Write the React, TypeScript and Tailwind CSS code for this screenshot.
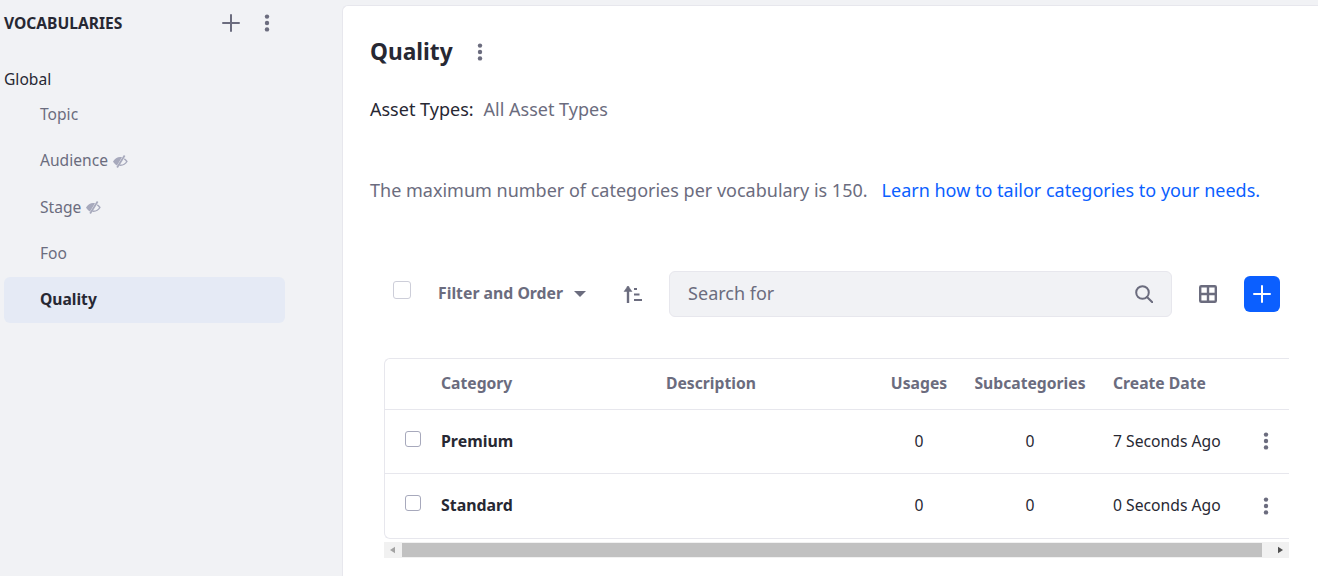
function Kebab({ className }: { className: string }) {
  return (
    <svg viewBox="0 0 6 18" className={className} fill="currentColor">
      <circle cx="3" cy="2.6" r="2.2" />
      <circle cx="3" cy="9" r="2.2" />
      <circle cx="3" cy="15.4" r="2.2" />
    </svg>
  )
}

function PlusIcon({ className }: { className: string }) {
  return (
    <svg viewBox="0 0 18 18" className={className} fill="none" stroke="currentColor" strokeWidth="2" strokeLinecap="round">
      <path d="M9 1v16M1 9h16" />
    </svg>
  )
}

function EyeOff() {
  return (
    <svg viewBox="0 0 15 13" className="w-[15px] h-[13px] ml-[5px] text-[#a7a9bc]" fill="currentColor">
      <path d="M0 6.500C1.600 3.800 4.200 2 7.200 2c.6 0 1.200.1 1.800.2L4 10.500C2.300 9.700 1 8.300 0 6.500Z" />
      <path d="M10.900 0l1.500 1-7.500 12-1.500-1Z" />
      <path d="M11.300 3.800c1 .6 1.900 1.600 2.600 2.700-1.400 2.300-3.700 3.700-6.300 3.700-.4 0-.8 0-1.200-.1" fill="none" stroke="currentColor" strokeWidth="1.400" />
    </svg>
  )
}

function NavItem({ label, hidden, className }: { label: string; hidden?: boolean; className: string }) {
  return (
    <div className={`flex items-center pl-9 text-[15.6px] text-[#6b6c7e] ${className}`}>
      {label}
      {hidden && <EyeOff />}
    </div>
  )
}

function Row({ name, date, last }: { name: string; date: string; last?: boolean }) {
  return (
    <div className={`grid grid-cols-[56px_225px_211px_84px_138px_1fr] h-[64px] items-center text-[#272833] text-[15.7px] ${last ? '' : 'border-b border-[#e7e7ed]'}`}>
      <div className={`pl-[20px] ${last ? '-mt-[6px]' : '-mt-[5px]'}`}>
        <div className="w-[16px] h-[16px] rounded-[3px] border border-[#a7a9bc] bg-white" />
      </div>
      <div className="font-bold text-[15.9px]">{name}</div>
      <div />
      <div className="text-center">0</div>
      <div className="text-center">0</div>
      <div className="flex items-center pl-[14px] whitespace-nowrap">
        {date}
        <Kebab className="w-[6px] h-[18px] ml-[42px] text-[#6b6c7e] shrink-0" />
      </div>
    </div>
  )
}

export default function App() {
  return (
    <div className="w-[1318px] h-[576px] flex overflow-hidden bg-[#f1f2f5] font-['Noto_Sans',sans-serif]">
      {/* Sidebar */}
      <aside className="w-[342px] shrink-0 pl-1 pt-[11px]">
        <div className="flex items-center w-[266px] h-[26px]">
          <span className="font-bold text-[15.6px] text-[#272833]">VOCABULARIES</span>
          <PlusIcon className="w-[18px] h-[18px] ml-auto -mt-[2px] text-[#6b6c7e]" />
          <Kebab className="w-[6px] h-[18px] ml-[24px] -mt-[2px] text-[#6b6c7e]" />
        </div>
        <div className="mt-[30px] h-[26px] flex items-center text-[15.6px] text-[#272833]">Global</div>
        <div className="w-[281px] -mt-[1px]">
          <NavItem label="Topic" className="h-[46px]" />
          <NavItem label="Audience" hidden className="h-[46px]" />
          <NavItem label="Stage" hidden className="h-[47px]" />
          <NavItem label="Foo" className="h-[46px]" />
          <div className="h-[46px] flex items-center pl-9 text-[15.6px] font-bold text-[#272833] bg-[#e5eaf5] rounded-md">Quality</div>
        </div>
      </aside>

      {/* Main panel */}
      <main className="flex-1 mt-[5px] bg-white border-l border-t border-[#e7e7ed] rounded-tl-md pl-[27px] pr-[29px] min-w-0">
        <div className="flex items-center h-[40px] mt-[26px]">
          <h1 className="font-bold text-[22.7px] text-[#272833]">Quality</h1>
          <Kebab className="w-[6px] h-[18px] ml-[24px] text-[#6b6c7e]" />
        </div>
        <div className="mt-[25px] text-[18px] text-[#272833] h-[24px] flex items-center">
          Asset Types:
          <span className="ml-[10px] text-[#6b6c7e]">All Asset Types</span>
        </div>
        <div className="mt-[57px] text-[18px] h-[24px] flex items-center text-[#6b6c7e] whitespace-nowrap">
          The maximum number of categories per vocabulary is 150.
          <a className="ml-[14px] text-[#0b5fff]">Learn how to tailor categories to your needs.</a>
        </div>

        {/* Toolbar */}
        <div className="flex items-center mt-[69px] h-[46px] pl-[23px] w-[920px]">
          <div className="w-[18px] h-[18px] rounded-[3px] border border-[#cdced9] bg-white -mt-[9px]" />
          <span className="ml-[27px] font-bold text-[15.8px] text-[#6b6c7e] whitespace-nowrap">Filter and Order</span>
          <svg viewBox="0 0 12 6" className="w-[12px] h-[6px] ml-[11px] text-[#6b6c7e]" fill="currentColor">
            <path d="M0 0h12L6 6Z" />
          </svg>
          <svg viewBox="0 0 19 18" className="w-[19px] h-[18px] ml-[37px] text-[#6b6c7e]" fill="none" stroke="currentColor" strokeWidth="2.400">
            <path d="M5 18V1.500" />
            <path d="M1 6.500 5 1l4 5.500Z" fill="currentColor" strokeWidth="0.500" />
            <path d="M11 4h3M11 9.500h5.500M11 15h8" strokeWidth="2" />
          </svg>
          <div className="ml-[27px] w-[503px] h-[46px] rounded-md bg-[#f1f2f5] border border-[#e7e7ed] flex items-center pl-[18px] pr-[18px] text-[18px] text-[#6b6c7e]">
            <span className="-mt-[2px]">Search for</span>
            <svg viewBox="0 0 18 18" className="w-[18px] h-[18px] ml-auto text-[#6b6c7e]" fill="none" stroke="currentColor" strokeWidth="2">
              <circle cx="7.500" cy="7.500" r="6.300" />
              <path d="M12 12l5.300 5.300" strokeLinecap="round" />
            </svg>
          </div>
          <svg viewBox="0 0 18 18" className="w-[18px] h-[18px] ml-[27px] text-[#6b6c7e]" fill="none" stroke="currentColor" strokeWidth="2.400">
            <rect x="1.200" y="1.200" width="15.600" height="15.600" rx="1" />
            <path d="M9 1v16M1 9h16" />
          </svg>
          <div className="ml-[27px] w-[36px] h-[36px] rounded-md bg-[#0b5fff] flex items-center justify-center">
            <PlusIcon className="w-[18px] h-[18px] text-white" />
          </div>
        </div>

        {/* Table */}
        <div className="ml-[14px] w-[905px] mt-[41px] border border-[#e7e7ed] border-r-0 rounded-l-md">
          <div className="grid grid-cols-[56px_225px_211px_84px_138px_1fr] h-[51px] items-center border-b border-[#e7e7ed] font-bold text-[15.7px] text-[#6b6c7e] whitespace-nowrap">
            <div />
            <div>Category</div>
            <div>Description</div>
            <div className="text-center">Usages</div>
            <div className="text-center">Subcategories</div>
            <div className="pl-[14px]">Create Date</div>
          </div>
          <Row name="Premium" date="7 Seconds Ago" />
          <Row name="Standard" date="0 Seconds Ago" last />
        </div>

        {/* Scrollbar */}
        <div className="ml-[14px] w-[905px] mt-[3px] h-[16px] bg-[#f1f1f1] flex items-center">
          <svg viewBox="0 0 6 8" className="ml-[6px] w-[5px] h-[8px] text-[#a3a3a3]" fill="currentColor"><path d="M6 0v8L0 4Z" /></svg>
          <div className="ml-[7px] w-[860px] h-[14px] bg-[#c1c1c1]" />
          <svg viewBox="0 0 6 8" className="ml-[16px] w-[5px] h-[8px] text-[#505050]" fill="currentColor"><path d="M0 0v8l6-4Z" /></svg>
        </div>
      </main>
    </div>
  )
}
